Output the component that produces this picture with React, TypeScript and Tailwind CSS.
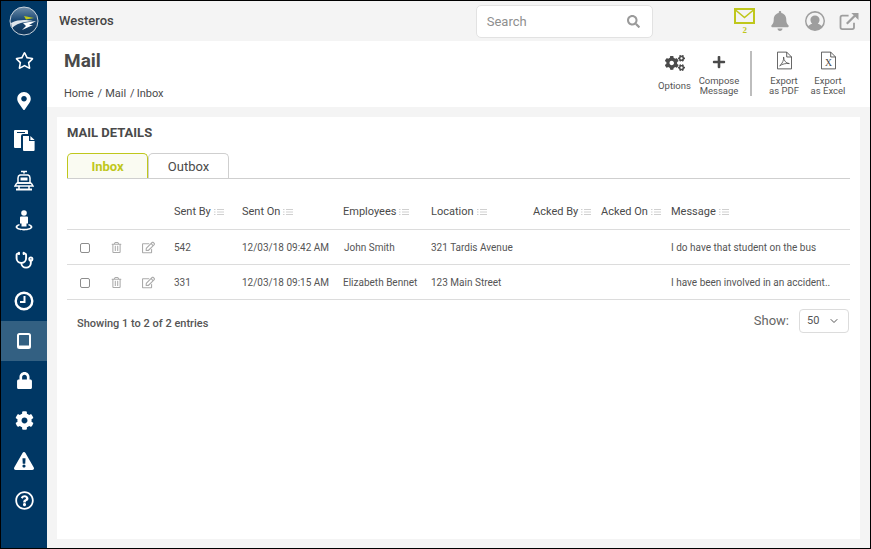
import { ReactNode } from "react";
import {
  FaBell,
  FaCog,
  FaCogs,
  FaExclamationTriangle,
  FaLock,
  FaMapMarkerAlt,
  FaPlus,
  FaRegEdit,
  FaRegQuestionCircle,
  FaRegStar,
  FaRegTrashAlt,
  FaSearch,
} from "react-icons/fa";
import { ChevronDown, Stethoscope } from "lucide-react";

function Logo() {
  return (
    <svg width="30" height="30" viewBox="0 0 30 30">
      <defs>
        <linearGradient id="globe" x1="0" y1="0" x2="0" y2="1">
          <stop offset="0" stopColor="#6f8ea9" />
          <stop offset="0.45" stopColor="#1d4a75" />
          <stop offset="1" stopColor="#0b3257" />
        </linearGradient>
      </defs>
      <circle cx="15" cy="15" r="14" fill="url(#globe)" stroke="#c9d3dc" strokeWidth="1" />
      <path d="M2 17 C10 13 18 14 24 15 L16 16 C10 17 6 19 3 22 Z" fill="#dfe6ec" />
      <path d="M15 10 L25 12 L17 13.5 Z" fill="#c1c91b" />
      <path d="M14 17 L27 15 L20 19 L24 19 L13 24 L17 20 Z" fill="#ffffff" />
    </svg>
  );
}

function PersonPin() {
  return (
    <svg width="18" height="21" viewBox="0 0 18 21" fill="#fff">
      <circle cx="9" cy="3" r="2.8" />
      <path d="M6 6.5 h6 a1 1 0 0 1 1 1 v6 h-1.5 v3 h-5 v-3 H5 v-6 a1 1 0 0 1 1-1z" />
      <path d="M4.5 14 C2 14.6 .6 15.5 .6 17 C.6 19 4.5 20.4 9 20.4 C13.5 20.4 17.4 19 17.4 17 C17.4 15.5 16 14.6 13.5 14 L13.5 15.4 C15 15.8 15.6 16.4 15.6 17 C15.6 18 12.6 18.8 9 18.8 C5.4 18.8 2.4 18 2.4 17 C2.4 16.4 3 15.8 4.5 15.4 Z" />
    </svg>
  );
}

function Docs() {
  return (
    <svg width="21" height="21" viewBox="0 0 21 21" fill="#fff">
      <path d="M0 1 a1 1 0 0 1 1-1 h12 a1 1 0 0 1 1 1 v3 H9 a2 2 0 0 0-2 2 v12 H1 a1 1 0 0 1-1-1 Z" />
      <path d="M3 2 h8 v1 H3z" fill="#003764" />
      <path d="M9 6 h6 v5 h5.6 v9 a1 1 0 0 1-1 1 H10 a1 1 0 0 1-1-1 Z" />
      <path d="M16.4 6 l4.2 4 h-4.2 Z" />
    </svg>
  );
}

function Bus() {
  return (
    <svg width="20" height="21" viewBox="0 0 20 21" fill="none" stroke="#fff" strokeWidth="1.5">
      <path d="M7 1.5 h6 M10 1.5 v2" />
      <path d="M6 5 C4.5 5.5 4 6.5 4 8 v5 h12 V8 c0-1.500-.5-2.500-2-3 Z" />
      <path d="M6.500 7.500 h7 v3 h-7 Z" fill="#fff" stroke="none" />
      <path d="M1 16 C3 12 4 13 4 13 h12 s1-1 3 3 Z" />
      <path d="M2 19.500 h16" strokeWidth="2" />
      <path d="M5 16 v3 M15 16 v3" />
    </svg>
  );
}

function Clock() {
  return (
    <svg width="20" height="20" viewBox="0 0 20 20" fill="none" stroke="#fff">
      <circle cx="10" cy="10" r="8.3" strokeWidth="2.4" />
      <path d="M10.500 5 v6 H6" strokeWidth="2" />
    </svg>
  );
}

function TabletIcon() {
  return (
    <svg width="14" height="16" viewBox="0 0 14 16" fill="none" stroke="#fff">
      <rect x="1" y="1" width="12" height="14" rx="1.500" strokeWidth="2" />
      <path d="M1 13.500 h12" strokeWidth="2" />
    </svg>
  );
}

function Envelope() {
  return (
    <svg width="21" height="16" viewBox="0 0 21 16" fill="none" stroke="#bfc71c" strokeWidth="2">
      <rect x="1" y="1" width="19" height="14" />
      <path d="M1.500 2 L10.500 9.500 L19.500 2" strokeWidth="1.600" />
    </svg>
  );
}

function UserCircle() {
  return (
    <svg width="20" height="20" viewBox="0 0 22 22" fill="#9e9e9e">
      <path fillRule="evenodd" d="M11 0 a11 11 0 1 0 0 22 a11 11 0 0 0 0-22 Z M11 1.800 a9.200 9.200 0 0 1 7.300 14.800 C17 15 15.500 14.500 14 14 c1.200-1 2-2.600 2-4.300 C16 7 13.800 5 11 5 S6 7 6 9.700 c0 1.700.8 3.300 2 4.300 c-1.500.5-3 1-4.300 2.600 A9.200 9.200 0 0 1 11 1.800 Z" />
    </svg>
  );
}

function ShareBox() {
  return (
    <svg width="21" height="18" viewBox="0 0 22 20" fill="none" stroke="#9e9e9e">
      <path d="M10 4 H3 a2 2 0 0 0-2 2 v11 a2 2 0 0 0 2 2 h11 a2 2 0 0 0 2-2 v-5" strokeWidth="2" />
      <path d="M8 13 L18 3" strokeWidth="2.500" />
      <path d="M13 1 h8 v8 Z" fill="#9e9e9e" stroke="none" />
    </svg>
  );
}

function FileIcon({ kind }: { kind: "pdf" | "x" }) {
  return (
    <svg width="15" height="19" viewBox="0 0 17 20" fill="none" stroke="#4a4a4a" strokeWidth="1">
      <path d="M.5 .5 H11 L16.500 6 V19.500 H.5 Z" />
      <path d="M11 .5 V6 H16.500" />
      {kind === "pdf" ? (
        <path d="M3 16 C6 14 8 9 7.500 6 C7.500 10 10 13 14 13.500 C10 13 6 14 3 16 Z" strokeWidth="0.9" />
      ) : (
        <text x="8.500" y="16" textAnchor="middle" fontSize="11" fontFamily="'Liberation Serif', serif" fill="#4a4a4a" stroke="none">
          X
        </text>
      )}
    </svg>
  );
}

function SortIcon() {
  return (
    <svg width="10" height="8" viewBox="0 0 10 8" stroke="#d0d0d0" strokeWidth="1" className="ml-[3px] inline-block">
      <path d="M0 1.500 h1.500 M0 4 h1.500 M0 6.500 h1.500 M3 1.500 h7 M3 4 h7 M3 6.500 h7" />
    </svg>
  );
}

const navItems: { icon: ReactNode; active?: boolean }[] = [
  { icon: <FaRegStar size={19} /> },
  { icon: <FaMapMarkerAlt size={18} /> },
  { icon: <Docs /> },
  { icon: <Bus /> },
  { icon: <PersonPin /> },
  { icon: <Stethoscope size={19} strokeWidth={2.4} /> },
  { icon: <Clock /> },
  { icon: <TabletIcon />, active: true },
  { icon: <FaLock size={17} /> },
  { icon: <FaCog size={19} /> },
  { icon: <FaExclamationTriangle size={20} /> },
  { icon: <FaRegQuestionCircle size={19} /> },
];

const rows = [
  {
    sentBy: "542",
    sentOn: "12/03/18 09:42 AM",
    employee: "John Smith",
    location: "321 Tardis Avenue",
    message: "I do have that student on the bus",
    indent: true,
  },
  {
    sentBy: "331",
    sentOn: "12/03/18 09:15 AM",
    employee: "Elizabeth Bennet",
    location: "123 Main Street",
    message: "I have been involved in an accident..",
    indent: false,
  },
];

const columns = "grid grid-cols-[32px_31px_32px_68px_101px_88px_102px_68px_70px_1fr]";

export default function App() {
  return (
    <div className="flex h-[549px] w-[871px] overflow-hidden border border-black bg-[#f4f4f4] font-['Roboto',sans-serif] text-[#4a4a4a]">
      {/* Sidebar */}
      <aside className="flex w-[46px] shrink-0 flex-col items-center bg-[#003764] text-white">
        <div className="flex h-[40px] w-full items-center justify-center">
          <Logo />
        </div>
        {navItems.map((item, i) => (
          <div
            key={i}
            className={`flex h-[40px] w-full items-center justify-center pb-[1px] ${item.active ? "bg-[#336082]" : ""}`}
          >
            {item.icon}
          </div>
        ))}
      </aside>

      <div className="flex min-w-0 flex-1 flex-col">
        {/* Top bar */}
        <header className="flex h-[40px] shrink-0 items-center bg-[#f4f4f4]">
          <span className="ml-[12px] text-[13px] font-medium text-[#444]">Westeros</span>
          <div className="ml-[362px] flex h-[33px] w-[177px] items-center justify-between rounded-[5px] border border-[#e2e2e2] bg-white pl-[10px] pr-[12px]">
            <span className="mt-[1px] text-[13px] text-[#8f8f8f]">Search</span>
            <FaSearch size={13} className="text-[#9a9a9a]" />
          </div>
          <div className="ml-[81px] flex h-full w-[22px] flex-col items-center pt-[7px]">
            <Envelope />
            <span className="mt-[1px] font-['Liberation_Serif',serif] text-[9px] font-bold leading-[10px] text-[#bfc71c]">2</span>
          </div>
          <FaBell size={20} className="ml-[14px] text-[#9e9e9e]" />
          <div className="ml-[15px]">
            <UserCircle />
          </div>
          <div className="ml-[14px]">
            <ShareBox />
          </div>
        </header>

        {/* Page heading */}
        <section className="flex h-[66px] shrink-0 justify-between bg-white pl-[17px]">
          <div>
            <h1 className="mt-[7px] text-[19px] font-bold leading-[26px] text-[#4a4a4a]">Mail</h1>
            <p className="mt-[13px] flex text-[11px] leading-[14px] text-[#4a4a4a]">
              <span>Home</span>
              <span className="ml-[4px]">/</span>
              <span className="ml-[3px]">Mail</span>
              <span className="ml-[4px]">/</span>
              <span className="ml-[2px]">Inbox</span>
            </p>
          </div>
          <div className="flex pt-[10px] text-center text-[9.500px] leading-[10px] text-[#555]">
            <div className="flex w-[39px] flex-col items-center">
              <FaCogs size={20} className="mt-[2px] text-[#4a4a4a]" />
              <span className="mt-[8px]">Options</span>
            </div>
            <div className="flex w-[50px] flex-col items-center">
              <FaPlus size={14} className="mt-[4px] text-[#4a4a4a]" />
              <span className="mt-[7px]">
                Compose
                <br />
                Message
              </span>
            </div>
            <div className="ml-[6px] h-[45px] w-[2px] bg-[#bdbdbd]" />
            <div className="ml-[11px] flex w-[42px] flex-col items-center">
              <FileIcon kind="pdf" />
              <span className="mt-[6px]">
                Export
                <br />
                as PDF
              </span>
            </div>
            <div className="ml-[2px] mr-[21px] flex w-[42px] flex-col items-center">
              <FileIcon kind="x" />
              <span className="mt-[6px]">
                Export
                <br />
                as Excel
              </span>
            </div>
          </div>
        </section>

        {/* Card */}
        <main className="mx-[10px] mt-[10px] mb-[9px] flex-1 bg-white px-[10px]">
          <h2 className="mt-[9px] text-[13px] font-bold leading-[14px] text-[#4a4a4a]">MAIL DETAILS</h2>

          <div className="mt-[13px] mr-0 flex h-[26px] border-b border-[#cfcfcf]">
            <div className="flex h-[25px] w-[81px] items-center justify-center rounded-t-[5px] border border-b-0 border-[#bfc71c] bg-[#fafbf2] pt-[2px] text-[13px] font-bold text-[#bfc71c]">
              Inbox
            </div>
            <div className="flex h-[25px] w-[81px] items-center justify-center rounded-t-[5px] border border-b-0 border-[#cfcfcf] pt-[2px] text-[13px] text-[#4a4a4a]">
              Outbox
            </div>
          </div>

          <div className={`${columns} mt-[19px] h-[32px] items-center whitespace-nowrap border-b border-[#dcdcdc] pb-[3px] text-[11px] text-[#4a4a4a]`}>
            <span />
            <span />
            <span />
            <span className="pl-[12px]">Sent By<SortIcon /></span>
            <span className="pl-[12px]">Sent On<SortIcon /></span>
            <span className="pl-[12px]">Employees<SortIcon /></span>
            <span className="pl-[12px]">Location<SortIcon /></span>
            <span className="pl-[12px]">Acked By<SortIcon /></span>
            <span className="pl-[12px]">Acked On<SortIcon /></span>
            <span className="pl-[12px]">Message<SortIcon /></span>
          </div>

          {rows.map((r) => (
            <div
              key={r.sentBy}
              className={`${columns} h-[35px] items-center border-b border-[#dcdcdc] text-[10px] text-[#555]`}
            >
              <span className="mt-[1px] pl-[13px]">
                <span className="block h-[10px] w-[10px] rounded-[2px] border border-[#8d8d8d]" />
              </span>
              <FaRegTrashAlt size={11} className="ml-[12px] mt-[1px] text-[#aaa]" />
              <FaRegEdit size={13} className="ml-[12px] mt-[1px] text-[#aaa]" />
              <span className="pl-[12px]">{r.sentBy}</span>
              <span className="pl-[12px] whitespace-nowrap">{r.sentOn}</span>
              <span className={`whitespace-nowrap ${r.indent ? "pl-[13px]" : "pl-[12px]"}`}>{r.employee}</span>
              <span className="pl-[12px] whitespace-nowrap">{r.location}</span>
              <span />
              <span />
              <span className="pl-[12px] whitespace-nowrap">{r.message}</span>
            </div>
          ))}

          <div className="flex items-center justify-between pt-[9px]">
            <span className="mt-[6px] pl-[10px] text-[11px] font-medium text-[#555]">Showing 1 to 2 of 2 entries</span>
            <div className="mr-[1px] flex items-center">
              <span className="text-[13px] text-[#666]">Show:</span>
              <div className="ml-[10px] flex h-[24px] w-[50px] items-center justify-between rounded-[4px] border border-[#dcdcdc] pl-[7px] pr-[8px] text-[11px] text-[#555]">
                50
                <ChevronDown size={12} />
              </div>
            </div>
          </div>
        </main>
      </div>
    </div>
  );
}
